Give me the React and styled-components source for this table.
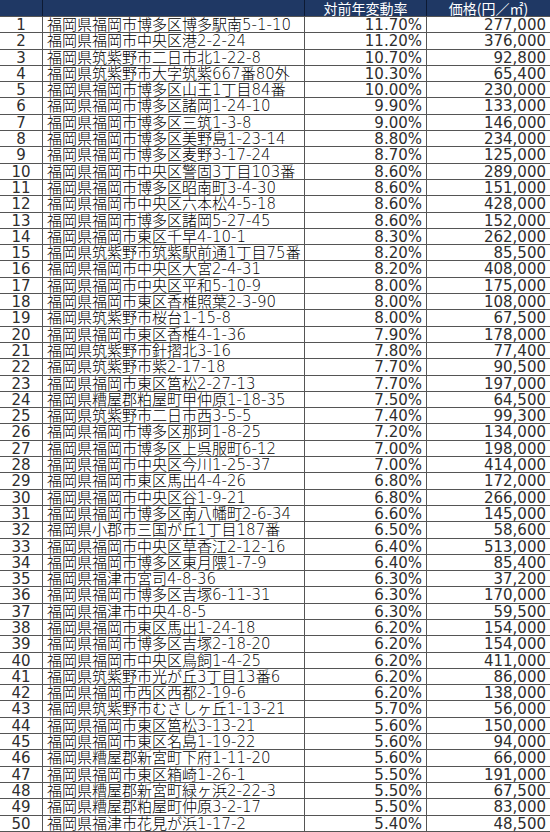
import React from 'react';
import styled, { createGlobalStyle } from 'styled-components';

const rows = [
  ['福岡県福岡市博多区博多駅南5-1-10', '11.70%', '277,000'],
  ['福岡県福岡市中央区港2-2-24', '11.20%', '376,000'],
  ['福岡県筑紫野市二日市北1-22-8', '10.70%', '92,800'],
  ['福岡県筑紫野市大字筑紫667番80外', '10.30%', '65,400'],
  ['福岡県福岡市博多区山王1丁目84番', '10.00%', '230,000'],
  ['福岡県福岡市博多区諸岡1-24-10', '9.90%', '133,000'],
  ['福岡県福岡市博多区三筑1-3-8', '9.00%', '146,000'],
  ['福岡県福岡市博多区美野島1-23-14', '8.80%', '234,000'],
  ['福岡県福岡市博多区麦野3-17-24', '8.70%', '125,000'],
  ['福岡県福岡市中央区警固3丁目103番', '8.60%', '289,000'],
  ['福岡県福岡市博多区昭南町3-4-30', '8.60%', '151,000'],
  ['福岡県福岡市中央区六本松4-5-18', '8.60%', '428,000'],
  ['福岡県福岡市博多区諸岡5-27-45', '8.60%', '152,000'],
  ['福岡県福岡市東区千早4-10-1', '8.30%', '262,000'],
  ['福岡県筑紫野市筑紫駅前通1丁目75番', '8.20%', '85,500'],
  ['福岡県福岡市中央区大宮2-4-31', '8.20%', '408,000'],
  ['福岡県福岡市中央区平和5-10-9', '8.00%', '175,000'],
  ['福岡県福岡市東区香椎照葉2-3-90', '8.00%', '108,000'],
  ['福岡県筑紫野市桜台1-15-8', '8.00%', '67,500'],
  ['福岡県福岡市東区香椎4-1-36', '7.90%', '178,000'],
  ['福岡県筑紫野市針摺北3-16', '7.80%', '77,400'],
  ['福岡県筑紫野市紫2-17-18', '7.70%', '90,500'],
  ['福岡県福岡市東区筥松2-27-13', '7.70%', '197,000'],
  ['福岡県糟屋郡粕屋町甲仲原1-18-35', '7.50%', '64,500'],
  ['福岡県筑紫野市二日市西3-5-5', '7.40%', '99,300'],
  ['福岡県福岡市博多区那珂1-8-25', '7.20%', '134,000'],
  ['福岡県福岡市博多区上呉服町6-12', '7.00%', '198,000'],
  ['福岡県福岡市中央区今川1-25-37', '7.00%', '414,000'],
  ['福岡県福岡市東区馬出4-4-26', '6.80%', '172,000'],
  ['福岡県福岡市中央区谷1-9-21', '6.80%', '266,000'],
  ['福岡県福岡市博多区南八幡町2-6-34', '6.60%', '145,000'],
  ['福岡県小郡市三国が丘1丁目187番', '6.50%', '58,600'],
  ['福岡県福岡市中央区草香江2-12-16', '6.40%', '513,000'],
  ['福岡県福岡市博多区東月隈1-7-9', '6.40%', '85,400'],
  ['福岡県福津市宮司4-8-36', '6.30%', '37,200'],
  ['福岡県福岡市博多区吉塚6-11-31', '6.30%', '170,000'],
  ['福岡県福津市中央4-8-5', '6.30%', '59,500'],
  ['福岡県福岡市東区馬出1-24-18', '6.20%', '154,000'],
  ['福岡県福岡市博多区吉塚2-18-20', '6.20%', '154,000'],
  ['福岡県福岡市中央区鳥飼1-4-25', '6.20%', '411,000'],
  ['福岡県筑紫野市光が丘3丁目13番6', '6.20%', '86,000'],
  ['福岡県福岡市西区西都2-19-6', '6.20%', '138,000'],
  ['福岡県筑紫野市むさしヶ丘1-13-21', '5.70%', '56,000'],
  ['福岡県福岡市東区筥松3-13-21', '5.60%', '150,000'],
  ['福岡県福岡市東区名島1-19-22', '5.60%', '94,000'],
  ['福岡県糟屋郡新宮町下府1-11-20', '5.60%', '66,000'],
  ['福岡県福岡市東区箱崎1-26-1', '5.50%', '191,000'],
  ['福岡県糟屋郡新宮町緑ヶ浜2-22-3', '5.50%', '67,500'],
  ['福岡県糟屋郡粕屋町仲原3-2-17', '5.50%', '83,000'],
  ['福岡県福津市花見が浜1-17-2', '5.40%', '48,500'],
];

const GlobalStyle = createGlobalStyle`
  body {
    margin: 0;
    background: #fff;
    font-family: "DejaVu Sans", "Noto Sans CJK JP", sans-serif;
  }
`;

const Sheet = styled.div`
  width: 550px;
  height: 832px;
  display: flex;
  flex-direction: column;
  overflow: hidden;
`;

const Row = styled.div`
  display: grid;
  grid-template-columns: 43px 262px 122px 123px;
  height: 16.3px;
  flex: none;
  box-sizing: border-box;
  border-bottom: 1px solid #555;
  background: #fff;
`;

const HeadRow = styled(Row)`
  height: 17px;
  background: #1f3864;
`;

const Cell = styled.div`
  box-sizing: border-box;
  border-right: 1px solid #555;
  display: flex;
  align-items: center;
  justify-content: ${({ $align }) => $align || 'flex-start'};
  padding: ${({ $align }) => ($align === 'flex-end' ? '1px 4px 0 0' : $align === 'center' ? '1px 0 0' : '1px 0 0 4px')};
  font-size: 15px;
  font-weight: 400;
  line-height: 15px;
  color: #2e2e2e;
  white-space: nowrap;
  &:last-child {
    border-right: none;
  }
`;

const AddressCell = styled(Cell)`
  font-weight: 300;
  color: #000;
`;

const HeadCell = styled.div`
  box-sizing: border-box;
  border-right: 1px solid #0d1a33;
  display: flex;
  align-items: center;
  justify-content: center;
  font-family: "Noto Sans CJK JP", sans-serif;
  font-size: 14px;
  line-height: 16px;
  color: #fff;
  white-space: nowrap;
  &:last-child {
    border-right: none;
  }
`;

export default function App() {
  return (
    <>
      <GlobalStyle />
      <Sheet>
        <HeadRow>
          <HeadCell />
          <HeadCell />
          <HeadCell>対前年変動率</HeadCell>
          <HeadCell>価格(円／㎡)</HeadCell>
        </HeadRow>
        {rows.map(([addr, rate, price], i) => (
          <Row key={addr + i}>
            <Cell $align="center">{i + 1}</Cell>
            <AddressCell>{addr}</AddressCell>
            <Cell $align="flex-end">{rate}</Cell>
            <Cell $align="flex-end">{price}</Cell>
          </Row>
        ))}
      </Sheet>
    </>
  );
}
